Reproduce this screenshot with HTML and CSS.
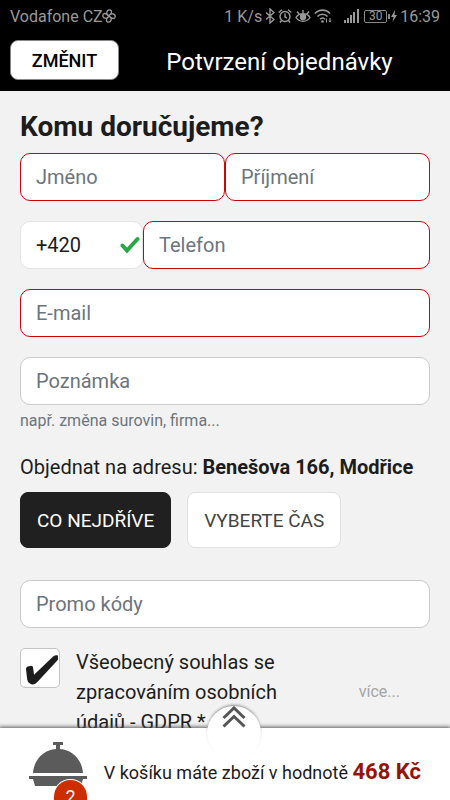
FILE: index.html
```html
<!DOCTYPE html>
<html lang="cs">
<head>
<meta charset="utf-8">
<meta name="viewport" content="width=device-width, initial-scale=1">
<title>Potvrzení objednávky</title>
<link rel="stylesheet" href="styles.css">
</head>
<body>
<div class="app">
  <div class="status">
    <span>Vodafone CZ</span>
    <svg class="carrier" width="14" height="14" viewBox="0 0 14 14" fill="none" stroke="currentColor" stroke-width="1.300">
      <path d="M7 7C3.500 5.500 4.500 .7 7.500 .8S10 4.500 7 7C8.500 3.500 13.300 4.500 13.200 7.500S9.500 10 7 7C10.500 8.500 9.500 13.300 6.500 13.200S4 9.500 7 7C5.500 10.500 .7 9.500 .8 6.500S4.500 4 7 7z"/>
    </svg>
    <span class="speed">1 K/s</span>
    <svg width="10" height="16" viewBox="0 0 10 16" fill="none" stroke="currentColor" stroke-width="1.4">
      <path d="M1 4.500l8 7L5 15V1l4 3.500-8 7"/>
    </svg>
    <svg width="14" height="16" viewBox="0 0 14 16" fill="none" stroke="currentColor" stroke-width="1.4">
      <circle cx="7" cy="8.500" r="5"/><path d="M7 5.500v3.500l2 1M.7 4.500L4 1.700M13.300 4.500L10 1.700M3.500 12.500L2 14.500M10.500 12.500l1.500 2"/>
    </svg>
    <svg width="16" height="16" viewBox="0 0 16 16" fill="none" stroke="currentColor" stroke-width="1.400">
      <path d="M1 9.500C4 4.500 12 4.500 15 9.500C12 14.500 4 14.500 1 9.500zM8 5.500V2M4 6L2 3.500M12 6l2-2.500"/><circle cx="8" cy="9" r="2.500" fill="currentColor"/>
    </svg>
    <svg width="18" height="16" viewBox="0 0 18 16" fill="none" stroke="currentColor" stroke-width="1.600">
      <path d="M1 5.500C5 1 12 1 16 5.500M3.500 8.500C6 5.500 11 5.500 13.500 8.500M6 11.200c1.500-1.700 3.500-1.700 5 0"/><circle cx="8.500" cy="13.500" r="1.300" fill="currentColor" stroke="none"/><path d="M12.500 10.500v4M16 10v4M15 12.500l1 1.500 1-1.500" stroke-width="1"/>
    </svg>
    <svg class="signal" width="15" height="14" viewBox="0 0 15 14" fill="currentColor">
      <path d="M0 11h2v3H0zM3 9h2v5H3zM6 6h2v8H6zM9 3h2v11H9zM13 0h2v14h-2z"/>
    </svg>
    <span class="battery">30</span>
    <svg class="bolt" width="6" height="14" viewBox="0 0 6 14" fill="currentColor"><path d="M4 1L0 8h2.500L1.500 13 6 6H3.500z"/></svg>
    <span>16:39</span>
  </div>

  <header class="header">
    <button class="change" type="button">ZMĚNIT</button>
    <div class="title">Potvrzení objednávky</div>
  </header>

  <main class="content">
    <h1 class="heading">Komu doručujeme?</h1>
    <form class="form">
      <div class="row">
        <input class="field invalid" type="text" placeholder="Jméno" aria-label="Jméno">
        <input class="field invalid" type="text" placeholder="Příjmení" aria-label="Příjmení">
      </div>
      <div class="row">
        <div class="prefix">
          <input class="field valid" type="text" value="+420" aria-label="Předvolba">
          <svg class="tick" width="20" height="18" viewBox="0 0 20 18" fill="none" stroke="#28a745" stroke-width="4" stroke-linecap="round"><path d="M2.500 9.500L7 14.500 17.500 3"/></svg>
        </div>
        <input class="field invalid" type="tel" placeholder="Telefon" aria-label="Telefon">
      </div>
      <input class="field invalid" type="email" placeholder="E-mail" aria-label="E-mail">
      <div class="note">
        <input class="field" type="text" id="note" placeholder="Poznámka" aria-label="Poznámka">
        <label class="hint" for="note">např. změna surovin, firma...</label>
      </div>
    </form>

    <p class="address">Objednat na adresu: <b>Benešova 166, Modřice</b></p>
    <div class="times">
      <button class="time selected" type="button">CO NEJDŘÍVE</button>
      <button class="time" type="button">VYBERTE ČAS</button>
    </div>
    <input class="field" type="text" placeholder="Promo kódy" aria-label="Promo kódy">

    <div class="consent">
      <div class="checkbox">
        <input type="checkbox" id="gdpr" checked>
        <svg class="mark" width="33" height="31" viewBox="0 0 34 32" fill="#1c1c1c"><path d="M1 14.500Q1 12 4 11.500L6.500 11Q8 11 8.300 13L9.300 20.500L29 1.500Q31 0 34 .5V5L13 27.500Q9 32 5 29.500Q2.500 28 2.200 25z"/></svg>
      </div>
      <label for="gdpr">Všeobecný souhlas se zpracováním osobních údajů - GDPR *</label>
      <a class="more" href="#">více...</a>
    </div>
  </main>

  <footer class="cart">
    <button class="expand" type="button" aria-label="Zobrazit košík">
      <svg width="24" height="22" viewBox="0 0 24 22" fill="none" stroke="#555" stroke-width="3"><path d="M1.500 12L12 2l10.500 10M1.500 20.500L12 10.500l10.500 10"/></svg>
    </button>
    <div class="dish">
      <svg width="58" height="44" viewBox="0 0 58 44" fill="#5b5b5b"><path d="M24 0h10v3h-3v4c13 1 22 11 23 24H4C5 18 14 8 27 7V3h-3zM0 34h58v3h-4l-2 7H6l-2-7H0z"/></svg>
      <span class="badge">2</span>
    </div>
    <p class="total">V košíku máte zboží v hodnotě <strong>468 Kč</strong></p>
  </footer>
</div>
</body>
</html>
```
FILE: styles.css
```css
* {
  box-sizing: border-box;
}

body {
  margin: 0;
  font-family: Roboto, "Liberation Sans", sans-serif;
  font-size: 20px;
  color: #1c1c1c;
  background: #f2f2f2;
}

button,
input {
  font: inherit;
}

svg {
  display: block;
  flex: none;
}

.app {
  display: flex;
  flex-direction: column;
  height: 100vh;
}

.status {
  display: flex;
  flex: none;
  align-items: center;
  gap: 3px;
  height: 32px;
  padding: 0 10px;
  font-size: 16px;
  color: #999;
  background: #000;
}

.carrier {
  margin-left: -4px;
}

.speed {
  margin-left: auto;
}

.signal {
  margin: 0 2px 0 9px;
}

.battery {
  position: relative;
  width: 23px;
  height: 13px;
  border: 1px solid #888;
  border-radius: 2px;
  font-size: 12px;
  line-height: 11px;
  text-align: center;
}

.battery::after {
  content: "";
  position: absolute;
  top: 3px;
  right: -4px;
  width: 2px;
  height: 5px;
  background: #888;
}

.bolt {
  margin-left: 1px;
}

.header {
  display: flex;
  flex: none;
  align-items: flex-start;
  height: 59px;
  padding: 8px 10px 0;
  color: #fff;
  background: #000;
}

.change {
  width: 109px;
  height: 40px;
  padding: 0;
  border: 1px solid #888;
  border-radius: 8px;
  font-size: 18px;
  font-weight: 500;
  color: #000;
  background: #fff;
}

.title {
  flex: 1;
  font-size: 24px;
  line-height: 44px;
  text-align: center;
}

.content {
  flex: 1;
  min-height: 0;
  padding: 18px 20px 0;
  overflow-y: auto;
  scrollbar-width: none;
}

.heading {
  margin: 0 0 8px;
  font-size: 28px;
  font-weight: 700;
  line-height: 36px;
}

.form {
  display: grid;
  gap: 20px;
}

.row {
  display: flex;
}

.field {
  display: block;
  flex: 1;
  width: 100%;
  min-width: 0;
  height: 48px;
  padding: 0 15px;
  border: 1px solid #c8cacc;
  border-radius: 10px;
  color: #1c1c1c;
  background: #fff;
}

.field::placeholder {
  color: #6c757d;
  opacity: 1;
}

.invalid {
  border-color: #c4070b;
}

.valid {
  border-color: #e4e4e4;
}

.prefix {
  position: relative;
  width: 30%;
}

.tick {
  position: absolute;
  top: 15px;
  right: 3px;
}

.hint {
  display: block;
  margin-top: 3px;
  font-size: 16px;
  line-height: 26px;
  color: #6c757d;
}

.address {
  margin: 18px 0 10px;
  line-height: 30px;
}

.address b {
  font-weight: 700;
}

.times {
  display: flex;
  gap: 16px;
  margin-bottom: 32px;
}

.time {
  height: 56px;
  padding: 0 16px;
  border: 1px solid #e0e0e0;
  border-radius: 8px;
  font-size: 19px;
  color: #444;
  background: #fff;
}

.selected {
  border-color: #202020;
  color: #fff;
  background: #202020;
}

.consent {
  display: flex;
  align-items: center;
  margin-top: 19px;
  line-height: 30px;
}

.consent label {
  width: 250px;
  margin: 0 auto 0 16px;
}

.checkbox {
  position: relative;
  flex: none;
  align-self: flex-start;
  margin-top: 1px;
}

.checkbox input {
  display: block;
  width: 40px;
  height: 40px;
  margin: 0;
  appearance: none;
  border: 1px solid #c4c4c4;
  border-radius: 5px;
  background: #fff;
}

.mark {
  position: absolute;
  top: 7px;
  left: 5px;
  pointer-events: none;
}

.more {
  margin-right: 30px;
  font-size: 16px;
  color: #a5a5a5;
  text-decoration: none;
}

.cart {
  position: relative;
  display: flex;
  flex: none;
  height: 72px;
  padding: 14px 29px 0;
  background: #fff;
  box-shadow: 0 0 4px 1px #555;
}

.expand {
  position: absolute;
  top: -22px;
  left: 52%;
  display: flex;
  justify-content: center;
  width: 54px;
  height: 54px;
  margin-left: -27px;
  padding: 0;
  border: 0;
  border-radius: 50%;
  background: #fff;
  box-shadow: 0 -2px 3px -1px #888;
}

.dish {
  position: relative;
  flex: none;
}

.badge {
  position: absolute;
  top: 37px;
  left: 24px;
  width: 35px;
  height: 21px;
  overflow: hidden;
  border: 1px solid #fff;
  border-bottom: 0;
  border-radius: 18px 18px 0 0;
  font-size: 18px;
  line-height: 34px;
  text-align: center;
  color: #fff;
  background: #cc2e00;
}

.total {
  flex: 1;
  margin: 15px 0 0;
  font-size: 18px;
  line-height: 30px;
  text-align: right;
  white-space: nowrap;
}

.total strong {
  font-size: 22px;
  font-weight: 700;
  color: #951409;
}
```
